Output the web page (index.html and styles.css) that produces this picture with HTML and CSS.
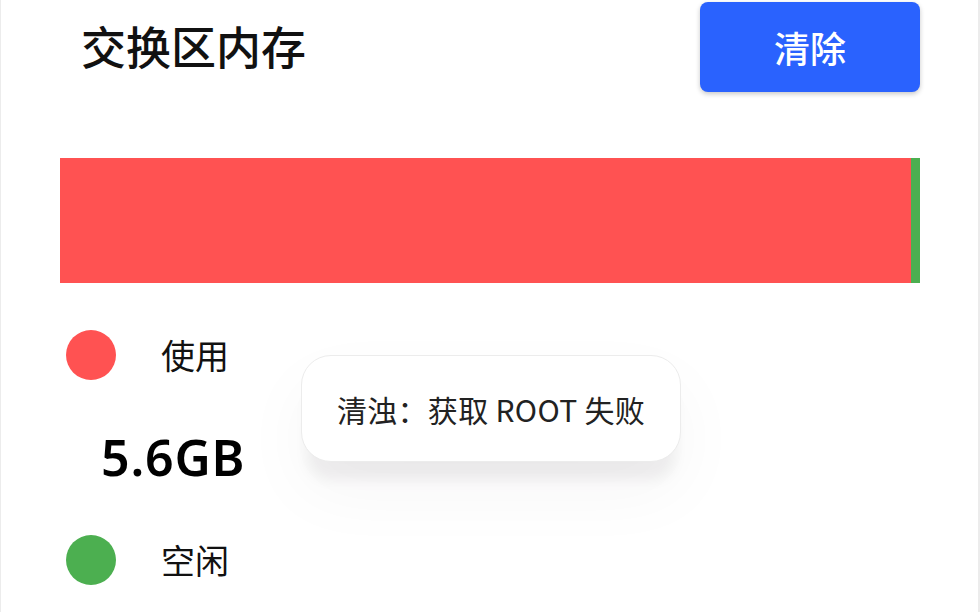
FILE: index.html
```html
<!DOCTYPE html>
<html lang="zh-CN">
<head>
<meta charset="utf-8">
<title>交换区内存</title>
<link rel="stylesheet" href="styles.css">
</head>
<body>
<div class="screen">
  <div class="header">
    <h1 class="title">交换区内存</h1>
    <button class="clear-btn">清除</button>
  </div>
  <div class="bar">
    <div class="bar-used" style="width: 98.95%"></div>
    <div class="bar-free"></div>
  </div>
  <div class="legend-row">
    <span class="dot dot-used"></span>
    <span class="legend-label">使用</span>
  </div>
  <div class="value">5.6GB</div>
  <div class="legend-row">
    <span class="dot dot-free"></span>
    <span class="legend-label">空闲</span>
  </div>
  <div class="toast">清浊：获取 ROOT 失败</div>
</div>
</body>
</html>
```

FILE: styles.css
```css
html, body {
  margin: 0;
  padding: 0;
  background: #ffffff;
}
body {
  font-family: "Noto Sans", "Noto Sans CJK SC", sans-serif;
  color: #111;
}
.screen {
  position: relative;
  box-sizing: border-box;
  width: 980px;
  height: 612px;
  overflow: hidden;
  border-left: 1px solid #ececec;
  border-right: 2px solid #ececec;
  padding: 2px 58px 0 59px;
  display: flex;
  flex-direction: column;
}
.header {
  display: flex;
  justify-content: space-between;
  align-items: center;
  height: 90px;
}
.title {
  margin: 0 0 0 21px;
  font-family: "Noto Sans CJK SC", sans-serif;
  font-size: 45px;
  font-weight: 500;
  line-height: 1;
  color: #111;
  position: relative;
  top: -2px;
}
.clear-btn {
  width: 220px;
  height: 90px;
  border: none;
  border-radius: 8px;
  background: #2a62fe;
  color: #fff;
  font-family: "Noto Sans CJK SC", sans-serif;
  font-size: 36px;
  font-weight: 500;
  padding: 0;
  box-shadow: 0 2px 5px rgba(0, 0, 0, 0.22);
}
.bar {
  margin-top: 66px;
  height: 125px;
  display: flex;
}
.bar-used {
  background: #ff5252;
  height: 100%;
}
.bar-free {
  flex: 1;
  background: #4caf50;
  height: 100%;
}
.legend-row {
  display: flex;
  align-items: center;
  height: 50px;
  margin-top: 47px;
}
.legend-row + .value + .legend-row {
  margin-top: 48px;
}
.dot {
  width: 50px;
  height: 50px;
  border-radius: 50%;
  margin-left: 6px;
  flex: none;
}
.dot-used { background: #ff5252; }
.dot-free { background: #4caf50; }
.legend-label {
  margin-left: 45px;
  font-family: "Noto Sans CJK SC", sans-serif;
  font-size: 34px;
  line-height: 1;
  color: #111;
}
.value {
  margin-top: 47px;
  margin-left: 41px;
  height: 60px;
  line-height: 60px;
  font-family: "Noto Sans", sans-serif;
  font-size: 50px;
  font-weight: 600;
  letter-spacing: 0.8px;
  color: #000;
}
.toast {
  position: absolute;
  left: 300px;
  top: 355px;
  box-sizing: border-box;
  width: 380px;
  height: 107px;
  border-radius: 30px;
  background: #fff;
  border: 1px solid #ececec;
  display: flex;
  align-items: center;
  justify-content: center;
  font-family: "Noto Sans CJK SC", sans-serif;
  font-size: 30px;
  letter-spacing: 0.3px;
  color: #222;
  box-shadow: 0 24px 14px -6px rgba(0, 0, 0, 0.06), 0 30px 70px rgba(40, 0, 40, 0.04);
}
```
